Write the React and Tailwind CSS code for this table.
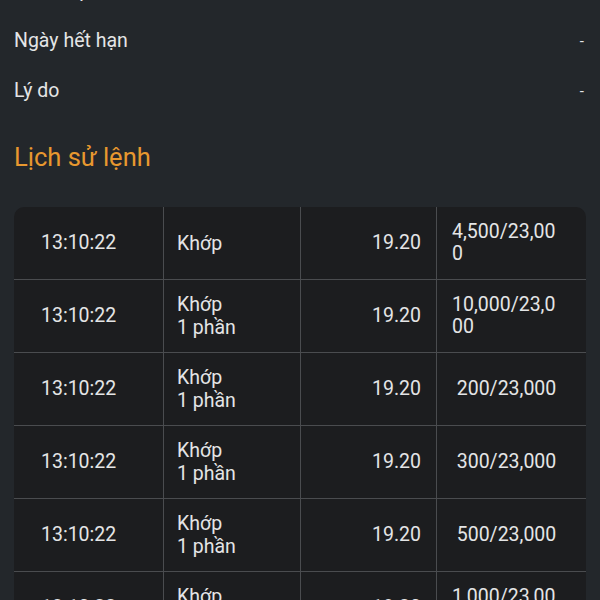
import React from 'react';

const infoRows = [
  { label: 'Giá khớp', value: '-' },
  { label: 'Ngày hết hạn', value: '-' },
  { label: 'Lý do', value: '-' },
];

const history = [
  { time: '13:10:22', status: ['Khớp'], price: '19.20', qty: '4,500/23,000' },
  { time: '13:10:22', status: ['Khớp', '1 phần'], price: '19.20', qty: '10,000/23,000' },
  { time: '13:10:22', status: ['Khớp', '1 phần'], price: '19.20', qty: '200/23,000' },
  { time: '13:10:22', status: ['Khớp', '1 phần'], price: '19.20', qty: '300/23,000' },
  { time: '13:10:22', status: ['Khớp', '1 phần'], price: '19.20', qty: '500/23,000' },
  { time: '13:10:22', status: ['Khớp', '1 phần'], price: '19.20', qty: '1,000/23,000' },
];

export default function App() {
  return (
    <div className="h-[600px] overflow-hidden bg-[#23272b] font-['Roboto','Liberation_Sans',sans-serif] text-[#e4e5e6]">
      <div className="-mt-[34px] px-[14px]">
        {infoRows.map((row) => (
          <div key={row.label} className="flex h-[50px] items-center justify-between text-[19.5px]">
            <span>{row.label}</span>
            <span className="pr-[2px] text-[15px]">{row.value}</span>
          </div>
        ))}

        <h2 className="mt-[25px] text-[25.5px] leading-[32px] text-[#e8982f]">Lịch sử lệnh</h2>

        <div className="mt-[34px] overflow-hidden rounded-[10px] bg-[#1c1d1f] text-[19.5px]">
          {history.map((r, i) => (
            <div
              key={i}
              className={`grid grid-cols-[149px_137px_136px_149px] ${i === 0 ? 'h-[72px]' : 'h-[73px] border-t border-[#4a4c4f]'}`}
            >
              <div className="flex items-center pl-[27px]">{r.time}</div>
              <div className="flex flex-col justify-center border-l border-[#4a4c4f] pl-[13px] leading-[23px]">
                {r.status.map((s) => (
                  <span key={s}>{s}</span>
                ))}
              </div>
              <div className="flex items-center justify-end border-l border-[#4a4c4f] pr-[15px]">{r.price}</div>
              <div className="flex items-center justify-center border-l border-[#4a4c4f] pl-[15px] pr-[24px]">
                <span className="break-all leading-[22px]">{r.qty}</span>
              </div>
            </div>
          ))}
        </div>
      </div>
    </div>
  );
}
